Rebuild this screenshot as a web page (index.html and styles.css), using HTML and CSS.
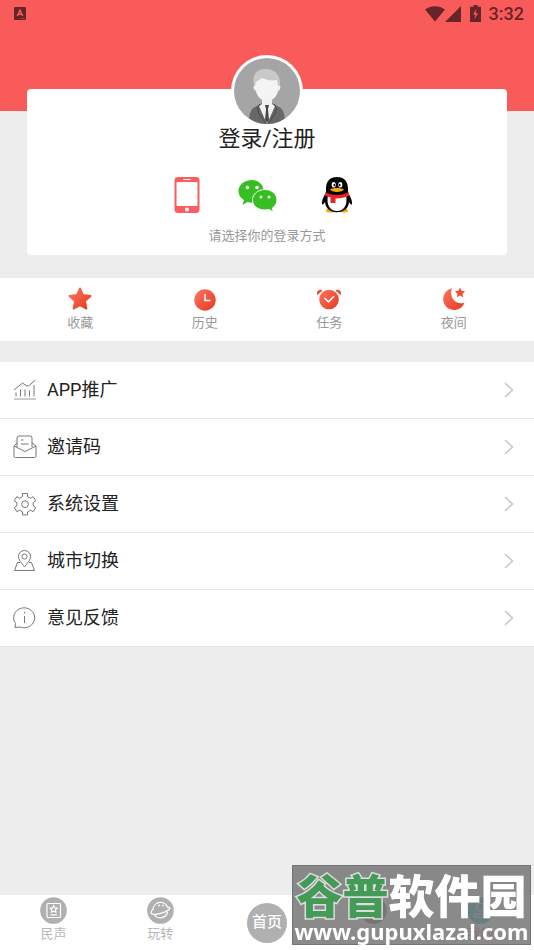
FILE: index.html
```html
<!DOCTYPE html>
<html lang="zh-CN">
<head>
<meta charset="utf-8">
<meta name="viewport" content="width=device-width, initial-scale=1">
<title>我的</title>
<link rel="stylesheet" href="styles.css">
</head>
<body>
<svg width="0" height="0" class="defs" aria-hidden="true">
  <defs>
    <linearGradient id="warm" x1="0" y1="0" x2="1" y2="1">
      <stop offset="0.1" stop-color="#f8705c"/><stop offset="0.9" stop-color="#e93f24"/>
    </linearGradient>
    <symbol id="chevron" viewBox="0 0 10 16"><path d="M1 1l7.500 7L1 15" fill="none" stroke="#c8c8c8" stroke-width="1.600"/></symbol>
  </defs>
</svg>

<header class="top">
  <div class="status">
    <svg class="status-app" width="12" height="13" viewBox="0 0 12 13"><rect width="12" height="13" rx="1" fill="#662528"/><path d="M3.300 9L6 3.200 8.700 9M4.300 7.200h3.400" fill="none" stroke="#f95b5b" stroke-width="1.500"/><path d="M6.500 11.500h4" stroke="#a83f42"/></svg>
    <svg width="20" height="16" viewBox="0 0 20 16"><path d="M0 3.500C6-1 14-1 20 3.500L10 15.500z" fill="#662528"/></svg>
    <svg width="16" height="16" viewBox="0 0 16 16"><path d="M0 16L16 0v16z" fill="#662528"/></svg>
    <svg class="battery" width="11" height="17" viewBox="0 0 11 17"><path d="M3.500 0h4v1.700H11V17H0V1.700h3.500z" fill="#662528"/><path d="M6.500 4L3 9.500h2.300L4.500 14 8 8.200H5.700z" fill="#f95b5b"/></svg>
    <time class="clock">3:32</time>
  </div>
</header>

<main>
  <section class="card">
    <div class="avatar">
      <svg viewBox="0 0 66 66">
        <defs><clipPath id="round"><circle cx="33" cy="33" r="33"/></clipPath></defs>
        <g clip-path="url(#round)">
          <rect width="66" height="66" fill="#a5a5a5"/>
          <path d="M15 66c0-11 2-15 6-17l7-4h10l7 4c4 2 6 6 6 17z" fill="#686868"/>
          <path d="M28 38h10v8l3 2-8 18-8-18 3-2z" fill="#f1f1f1"/>
          <path d="M21 23c0-7 5-9 12-9s12 3 12 9v4c2 0 2 5-1 6-1 6-6 10-11 10s-10-4-11-10c-3-1-3-6-1-6z" fill="#f4f4f4"/>
          <path d="M20 28c-2-10 1-16 10-17 10-1 17 5 16 17h-2l-1-6c-6 1-10 0-15-2l-6 4-1 4z" fill="#c9c9c9"/>
          <path d="M31 47h4l-1 4 1 11-2 3-2-3 1-11z" fill="#484848"/>
          <path d="M26 46l-3 5 2 1-1 2 8 12M40 46l3 5-2 1 1 2-8 12" fill="none" stroke="#484848"/>
        </g>
      </svg>
    </div>
    <h1 class="title">登录/注册</h1>
    <div class="methods">
      <button type="button" aria-label="手机登录">
        <svg width="26" height="38" viewBox="0 0 26 38"><rect x="0.500" y="1" width="25" height="36" rx="3.500" fill="#fc5d60"/><rect x="2.500" y="6" width="21" height="24" rx="1" fill="#fff"/><path d="M9.500 3.500h7" stroke="#fff"/><circle cx="13" cy="33.500" r="2" fill="#fff"/></svg>
      </button>
      <button type="button" aria-label="微信登录">
        <svg width="48" height="38" viewBox="0 0 48 38"><path d="M14 4C6 4 .5 9 .5 15c0 4 2 7 5.500 9l-1.500 5 5-3c2 .6 5 .9 8 .5C29 25 29 4 14 4z" fill="#36bf20"/><path d="M27 13.500c-7.500 0-12.500 5-12.500 10.500s5 10 12.500 10l4-.5 4.500 2.700-1.200-4C37 30 39 27.500 39 24c0-5.500-5-10.500-12-10.500z" fill="#36bf20" stroke="#fff" stroke-width="1"/><g fill="#fff"><circle cx="9.500" cy="11.500" r="1.800"/><circle cx="19" cy="11.500" r="1.800"/><circle cx="23" cy="21" r="1.500"/><circle cx="31" cy="21" r="1.500"/></g></svg>
      </button>
      <button type="button" aria-label="QQ登录">
        <svg width="32" height="38" viewBox="0 0 32 38"><path d="M5 35.500c0-2 2-4 5-4h12c3 0 5 2 5 4 0 1.200-9 1.200-11 .3-2 .9-11 .9-11-.3z" fill="#f8a90b"/><path d="M5 13C5 5 9 1 16 1s11 4 11 12v4c3 4 4.500 9 4 11-.6 1.500-2-.2-3-2-.5 6-5 10.300-12 10.300S4.500 32 4 26c-1 1.800-2.400 3.500-3 2-.5-2 1-7 4-11z" fill="#030303"/><path d="M7 19h18c2 10-2 16-9 16S5 29 7 19z" fill="#fff"/><ellipse cx="12.700" cy="8.700" rx="2" ry="2.800" fill="#fff"/><ellipse cx="19.300" cy="8.700" rx="2" ry="2.800" fill="#fff"/><ellipse cx="13.300" cy="9" rx=".8" ry="1.300"/><ellipse cx="18.700" cy="9" rx=".8" ry="1.300"/><path d="M9 13.500c3-2 11-2 14 0-2 3.300-12 3.300-14 0z" fill="#f8a90b"/><path d="M4.500 16c6 4 17 4 23 0l1 3.500c-4 2-9 3-14 3v4.500H9.500v-5.500L3.500 19.500z" fill="#e8232a"/></svg>
      </button>
    </div>
    <p class="hint">请选择你的登录方式</p>
  </section>

  <nav class="shortcuts" aria-label="快捷入口">
    <a href="#favorites"><svg width="24" height="24" viewBox="0 0 24 24"><path d="M12 1.500l3 6.600 7.500.8-5.600 5.200 1.500 7.400-6.400-3.400-6.400 3.400 1.500-7.400L1.500 8.900l7.500-.8z" fill="url(#warm)" stroke="url(#warm)" stroke-width="2" stroke-linejoin="round"/></svg>收藏</a>
    <a href="#history"><svg width="24" height="24" viewBox="0 0 24 24"><circle cx="12" cy="13" r="10.700" fill="url(#warm)"/><path d="M12 7v6.500h5.500" fill="none" stroke="#fff" stroke-width="1.500"/></svg>历史</a>
    <a href="#tasks"><svg width="24" height="24" viewBox="0 0 24 24"><circle cx="12" cy="12.500" r="9.800" fill="url(#warm)"/><path d="M.5 7.500C0 4 2 2.500 5 3.500zM23.500 7.500C24 4 22 2.500 19 3.500z" fill="#e94a30" stroke="#e94a30" stroke-linejoin="round"/><path d="M7.500 11l4 3.800L17 9.200" fill="none" stroke="#fff" stroke-width="1.600"/></svg>任务</a>
    <a href="#night"><svg width="24" height="24" viewBox="0 0 24 24"><path d="M10 1.200A11 11 0 1 0 22.500 15.800C13.500 18.500 6.500 10 10 1.200z" fill="url(#warm)"/><path d="M18 .5l1.600 3.200 3.500.5-2.600 2.500.6 3.600-3.100-1.700-3.100 1.700.6-3.600-2.600-2.500 3.500-.5z" fill="#ed5036"/></svg>夜间</a>
  </nav>

  <nav class="list" aria-label="菜单">
    <a href="#promote"><svg class="row-icon" viewBox="0 0 24 24"><path d="M1 12l6-5 2.500-2 3.500 2.500 2.500.5L22.500 2M3 18.500v-4M7.500 18.500v-7M12 18.500v-7M16.500 18.500v-6M21 18.500V7"/><path d="M1 21h22" class="soft"/></svg><span>APP推广</span><svg class="chevron"><use href="#chevron"/></svg></a>
    <a href="#invite"><svg class="row-icon" viewBox="0 0 24 24"><path d="M4 12V3q0-2 2-2h11q2 0 2 2v9M4 8l-3 3v10q0 1.500 1.500 1.500h19q1.500 0 1.500-1.500V11l-4-3M1 11l11 5.500L23 11M8 5h2.500M8 9h7.500"/></svg><span>邀请码</span><svg class="chevron"><use href="#chevron"/></svg></a>
    <a href="#settings"><svg class="row-icon" viewBox="0 0 24 24"><path d="M9.500 1.500h5v3l3 1.700 2.700-1.500 2.500 4.200-2.500 1.600v3.400l2.500 1.600-2.500 4.200-2.700-1.500-3 1.700v3h-5v-3l-3-1.700-2.700 1.500-2.500-4.200 2.500-1.600v-3.400L1.300 8.900l2.500-4.200 2.700 1.500 3-1.700z" stroke-linejoin="round"/><circle cx="12" cy="12.200" r="3.400"/></svg><span>系统设置</span><svg class="chevron"><use href="#chevron"/></svg></a>
    <a href="#city"><svg class="row-icon" viewBox="0 0 24 24"><path d="M11.500 18C8 13 5.500 11 5.500 7.500a6 6 0 0 1 12 0C17.500 11 15 13 11.500 18zM7 13.500H4.500L1.500 21.500h20l-3-8H16"/><circle cx="11.500" cy="7.500" r="2.600"/></svg><span>城市切换</span><svg class="chevron"><use href="#chevron"/></svg></a>
    <a href="#feedback"><svg class="row-icon" viewBox="0 0 24 24"><path d="M2 21.500l.5-4A10.500 10 0 1 1 7 21z" stroke-linejoin="round"/><path d="M11.500 10v7M11.500 6v1.500"/></svg><span>意见反馈</span><svg class="chevron"><use href="#chevron"/></svg></a>
  </nav>
</main>

<nav class="tabs" aria-label="主导航">
  <a href="#voice"><svg width="27" height="27" viewBox="0 0 27 27"><circle cx="13.500" cy="13.500" r="13.300" fill="#b0b0b0"/><g fill="none" stroke="#fff" stroke-width="1.200"><rect x="7" y="6.500" width="13.500" height="14" rx="1"/><path d="M13.700 8.700l1.100 2.200 2.400.3-1.700 1.700.4 2.300-2.200-1.100-2.200 1.100.4-2.300-1.700-1.700 2.400-.3zM10.500 17.800H17"/></g></svg>民声</a>
  <a href="#play"><svg width="27" height="27" viewBox="0 0 27 27"><circle cx="13.500" cy="13.500" r="13.300" fill="#b0b0b0"/><g fill="none" stroke="#fff" stroke-width="1.200"><path d="M6 12.500a7.500 7.500 0 0 1 14.600-2M20.600 15a7.500 7.500 0 0 1-13.500 2.500M6.200 12.200C2 16 4 18 9 17.300c6-1 12-3.500 13.500-5.300 1-1.500-.5-2-2-1.800M11 9l2-1M15 8l2 1"/></g></svg>玩转</a>
  <a href="#home" class="home"><span>首页</span></a>
  <a href="#service" aria-label="服务"><svg width="27" height="27" viewBox="0 0 27 27"><circle cx="13.500" cy="13.500" r="13.300" fill="#555"/><path d="M8 9h11v7H8zM7 19h13" fill="none" stroke="#999"/></svg></a>
  <a href="#me" class="active"><svg width="27" height="27" viewBox="0 0 27 27"><circle cx="13.500" cy="13.500" r="13.300" fill="#009ca2"/><circle cx="13.500" cy="10" r="4" fill="none" stroke="#fff"/><path d="M7 20v-3h13v3z" fill="none" stroke="#fff"/></svg>我的</a>
</nav>

<aside class="watermark">
  <strong><span>谷普</span>软件园</strong>
  <b>www.gupuxlazal.com</b>
</aside>
</body>
</html>
```
FILE: styles.css
```css
* { box-sizing: border-box; }
body {
  margin: 0;
  min-height: 100vh;
  display: flex;
  flex-direction: column;
  background: #ededed;
  color: #222;
  font-family: Roboto, "Noto Sans CJK SC", sans-serif;
  font-size: 13px;
}
a { color: inherit; text-decoration: none; }
svg { display: block; flex: none; }
.defs { position: absolute; }
main { flex: 1; }

.top { height: 111px; background: #f95b5b; }
.status {
  display: flex;
  align-items: center;
  height: 27px;
  padding: 0 10px 0 14px;
  color: #662528;
}
.status-app { margin-right: auto; }
.battery { margin: 0 8px 0 9px; }
.clock { font-size: 18px; font-weight: 500; line-height: 27px; }

.card {
  position: relative;
  margin: -22px 27px 0;
  padding: 34px 0 9px;
  border-radius: 4px;
  background: #fff;
  text-align: center;
}
.avatar {
  position: absolute;
  top: -34px;
  left: calc(50% - 36px);
  width: 72px;
  height: 72px;
  padding: 3px;
  border-radius: 50%;
  background: #fff;
}
.title {
  position: relative;
  margin: 0;
  font-size: 22px;
  font-weight: 400;
  line-height: 32px;
}
.methods {
  display: flex;
  justify-content: center;
  padding: 21px 10px 12px 0;
}
.methods button {
  display: flex;
  justify-content: center;
  width: 75px;
  padding: 0;
  border: 0;
  background: none;
}
.hint { margin: 0; color: #999; line-height: 20px; }

.shortcuts {
  display: grid;
  grid-template-columns: repeat(4, 1fr);
  margin: 23px 0 21px;
  padding: 9px 18px 8px;
  background: #fff;
  color: #999;
}
.shortcuts a {
  display: flex;
  flex-direction: column;
  align-items: center;
  gap: 2px;
  line-height: 20px;
}

.list { background: #fff; }
.list a {
  display: flex;
  align-items: center;
  height: 57px;
  padding: 0 20px 0 13px;
  border-bottom: 1px solid #e6e6e6;
  font-size: 18px;
}
.list span { flex: 1; margin-left: 10px; padding-bottom: 4px; }
.row-icon {
  width: 24px;
  height: 24px;
  fill: none;
  stroke: #777;
  stroke-width: 1;
}
.row-icon .soft { stroke: #999; }
.chevron { width: 10px; height: 16px; }

.tabs {
  display: grid;
  grid-template-columns: repeat(5, 1fr);
  height: 55px;
  background: #fff;
  color: #b8b8b8;
}
.tabs a {
  display: flex;
  flex-direction: column;
  align-items: center;
  padding-top: 2px;
  line-height: 20px;
}
.tabs .home { justify-content: center; padding: 0; }
.home span {
  width: 40px;
  height: 40px;
  border-radius: 50%;
  background: #b0b0b0;
  color: #fff;
  font-size: 15px;
  font-weight: 500;
  line-height: 38px;
  text-align: center;
}
.tabs .active { color: #d02030; }

.watermark {
  position: fixed;
  right: 3px;
  bottom: 5px;
  width: 239px;
  height: 80px;
  border: 1px solid #747474;
  background: rgba(122, 122, 122, 0.88);
  color: #fff;
  text-align: center;
  white-space: nowrap;
}
.watermark strong {
  display: block;
  font-size: 46px;
  font-weight: 900;
  line-height: 62px;
}
.watermark span {
  color: #439b57;
  paint-order: stroke fill;
  -webkit-text-stroke: 3px #ddd;
}
.watermark b {
  display: block;
  margin-top: -8px;
  font-family: "Noto Sans", sans-serif;
  font-size: 22px;
  line-height: 22px;
}
```
